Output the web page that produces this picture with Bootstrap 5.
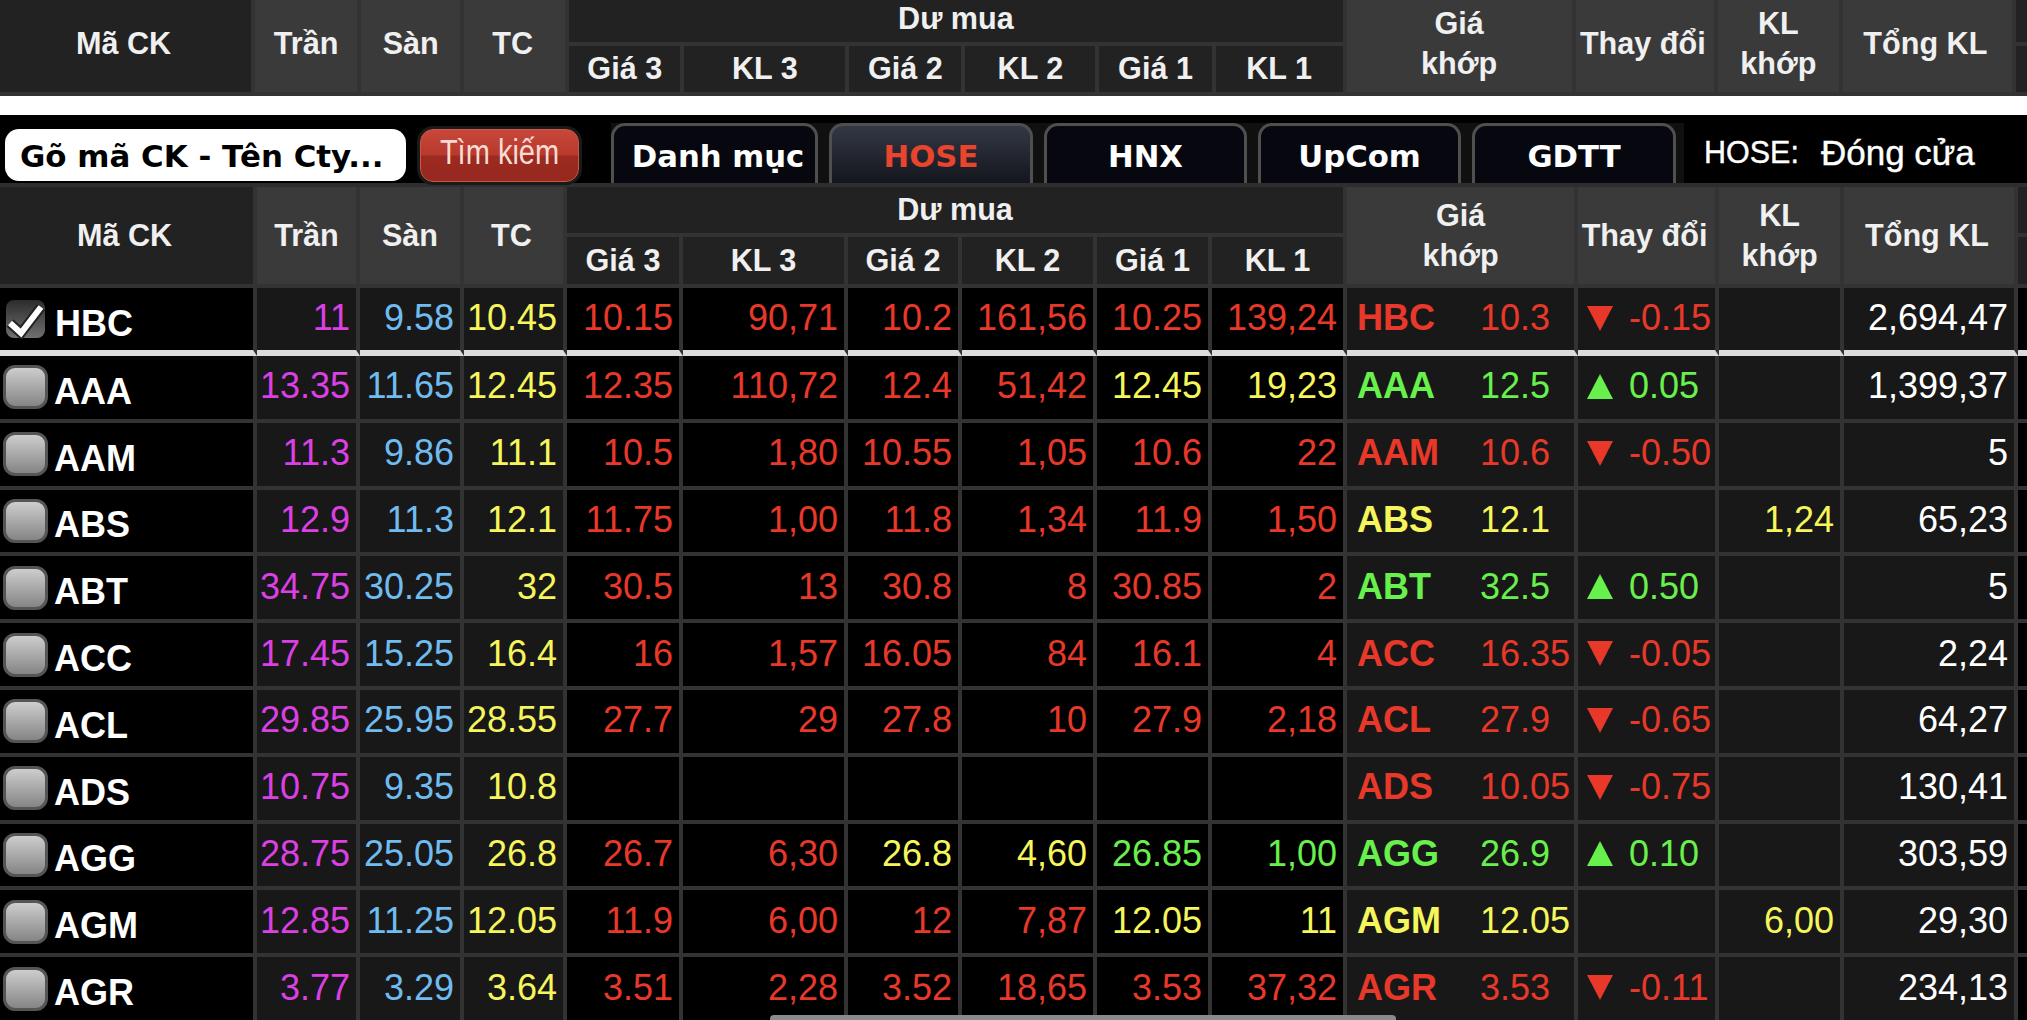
<!DOCTYPE html>
<html lang="vi">
<head>
    <meta charset="UTF-8">
    <meta name="viewport" content="width=device-width, initial-scale=1.0">
    <title>Bảng giá</title>
    <link href="https://cdn.jsdelivr.net/npm/bootstrap@5.3.0/dist/css/bootstrap.min.css" rel="stylesheet">
    <style>
        html, body {
            height: 100%;
        }
        body {
            background-color: #fff;
            font-family: "Liberation Sans", Arial, sans-serif;
            overflow: hidden;
            position: relative;
        }
        .board-section {
            background-color: #000;
            margin-top: 19px;
        }
        .top-clip {
            height: 96px;
            overflow: hidden;
        }
        .top-clip .price-table {
            margin-top: -5px;
        }

        /* thanh tim kiem + tab san */
        .board-toolbar {
            height: 72px;
            padding-left: 5px;
            border-bottom: 4px solid #2e2e2e;
        }
        .search-box.form-control {
            width: 401px;
            height: 52px;
            margin-top: 14px;
            padding: 3px 0 0 15px;
            border: 0;
            border-radius: 14px;
            background-color: #fff;
            color: #000;
            font: bold 30.9px/49px "DejaVu Sans", sans-serif;
            white-space: nowrap;
        }
        .search-btn.btn {
            width: 159px;
            height: 53px;
            margin: 14px 0 0 14px;
            padding: 0 0 6px;
            border: 1px solid #c9584a;
            border-radius: 13px;
            background: linear-gradient(#c8473a 0, #b83a2d 48%, #9c2a20 52%, #96281f 100%);
            box-shadow: 0 0 0 3px #1a1a1a;
            color: #f6dcd5;
            font-size: 29px;
            line-height: 1;
        }
        .search-label {
            display: inline-block;
            transform: scaleY(1.18);
        }
        .market-tabs.nav {
            height: 60px;
            width: 1073px;
            margin: 8px 0 0 32px;
            padding-right: 7px;
            gap: 11px;
            background-color: #101010;
            border: 0;
            flex-wrap: nowrap;
        }
        .market-tabs .nav-link {
            display: block;
            height: 60px;
            margin: 0;
            padding: 12px 0 0;
            text-align: center;
            background: #07080f;
            border: 3px solid #4f4f4f;
            border-bottom: 0;
            border-radius: 14px 14px 0 0;
            color: #fff;
            font: bold 30.7px/38px "DejaVu Sans", sans-serif;
        }
        .market-tabs .nav-link.active {
            background: linear-gradient(#333845, #14161d);
            border-color: #4f4f4f;
            color: #e8452c;
        }
        .market-tabs .tab-list {
            width: 207px;
            padding-left: 7px;
        }
        .tab-hose { width: 204px; }
        .tab-hnx, .tab-upcom { width: 203px; }
        .tab-gdtt { width: 204px; }
        .market-status {
            margin: 8px 0 0 20px;
            height: 60px;
            color: #fff;
            white-space: nowrap;
            gap: 22px;
            -webkit-text-stroke: 0.4px #fff;
        }
        .status-market {
            font-size: 30.5px;
        }
        .status-state {
            font-size: 35px;
        }

        /* bang gia */
        .price-table {
            --bs-table-bg: transparent;
            width: 2027px;
            table-layout: fixed;
            border-collapse: separate;
            border-spacing: 0;
            color: #fff;
        }
        .price-table > :not(caption) > * > * {
            padding: 0 6px 2px 0;
            border-style: solid;
            border-color: #333;
            border-width: 0 4px 4px 0;
            box-shadow: none;
            vertical-align: middle;
            white-space: nowrap;
            overflow: hidden;
        }
        .price-table > thead > * > * {
            padding: 0 0 2px;
            text-align: center;
            font-size: 30.6px;
            font-weight: 700;
            line-height: 40px;
            color: #f0f0f0;
            background-color: #222;
        }
        .price-table > thead > * > .head-light {
            background-color: #3a3a3a;
        }
        .price-table > thead > * > .head-wrap {
            white-space: normal;
        }
        .price-table > thead > * > .head-shift {
            padding-right: 4px;
        }
        .price-table > thead > * > .edge-col,
        .price-table > tbody > * > .edge-col {
            border-right-width: 0;
        }
        .main-head .row-a > th { height: 50px; }
        .main-head .row-b > th { height: 51px; }
        .top-clip .row-a > th { height: 51px; }
        .top-clip .row-b > th { height: 50px; }

        .price-table > tbody > * > td {
            height: 66.8px;
            font-size: 36px;
            line-height: 1;
            text-align: right;
            background-color: #000;
        }
        .price-table > tbody > * > .cell-grey {
            background-color: #181818;
        }
        .price-table > tbody > * > .cell-left {
            padding: 0 0 2px;
            text-align: left;
        }
        .price-table > tbody > * > .cell-name {
            padding: 0;
        }
        .price-table > tbody > .row-picked > td {
            height: 68px;
            border-bottom: 6px solid #dcdcdc;
        }
        .code-text {
            font-weight: 700;
        }
        .stock-name {
            margin: 9px 0 0 6px;
            color: #fff;
        }
        .match-code {
            width: 123px;
            margin-left: 10px;
        }
        .change-box {
            margin-left: 9px;
            gap: 16px;
        }
        .change-box svg {
            flex: none;
        }
        .tick-box {
            flex: none;
            width: 45px;
            height: 44px;
            margin-left: 3px;
            border: 3px solid #555;
            border-radius: 12px;
            background: linear-gradient(#cdcdcd, #858585);
        }
        .tick-box.tick-on {
            width: 39px;
            height: 38px;
            margin: 0 0 0 6px;
            border: 0;
            border-radius: 8px;
            background: linear-gradient(#2c2c2c, #707070);
        }
        .row-picked .stock-name {
            margin-left: 10px;
        }
        .col-r { color: #e8382a; }
        .col-g { color: #68f04c; }
        .col-y { color: #f6f65c; }
        .col-m { color: #dc40e4; }
        .col-b { color: #70bcf0; }

        .scroll-thumb {
            position: absolute;
            left: 770px;
            bottom: 0;
            width: 626px;
            height: 5px;
            border-radius: 4px 4px 0 0;
            background-color: #8a8a8a;
        }
    </style>
</head>
<body>

<!-- Dau bang bi cuon len tren cung -->
<div class="top-clip">
    <table class="table mb-0 price-table">
        <colgroup id="topCols"></colgroup>
        <thead id="topHead"></thead>
    </table>
</div>

<div class="board-section">
    <div class="board-toolbar d-flex align-items-start">
        <div class="form-control search-box">Gõ mã CK - Tên Cty...</div>
        <button type="button" class="btn search-btn"><span class="search-label">Tìm kiếm</span></button>
        <ul class="nav nav-tabs market-tabs">
            <li class="nav-item"><a class="nav-link tab-list" href="#">Danh mục</a></li>
            <li class="nav-item"><a class="nav-link tab-hose active" href="#">HOSE</a></li>
            <li class="nav-item"><a class="nav-link tab-hnx" href="#">HNX</a></li>
            <li class="nav-item"><a class="nav-link tab-upcom" href="#">UpCom</a></li>
            <li class="nav-item"><a class="nav-link tab-gdtt" href="#">GDTT</a></li>
        </ul>
        <div class="market-status d-flex align-items-center">
            <span class="status-market">HOSE:</span><span class="status-state">Đóng cửa</span>
        </div>
    </div>

    <table class="table mb-0 price-table">
        <colgroup id="mainCols"></colgroup>
        <thead id="mainHead" class="main-head"></thead>
        <tbody id="boardBody"></tbody>
    </table>
</div>

<div class="scroll-thumb"></div>

<script src="https://cdn.jsdelivr.net/npm/bootstrap@5.3.0/dist/js/bootstrap.bundle.min.js"></script>
<script>
    // Do rong cot cua hai bang (bang tren lech vai pixel)
    const MAIN_WIDTHS = [257, 103, 104, 103, 116, 165, 114, 135, 115, 135, 231, 141, 125, 174, 9];
    const TOP_WIDTHS = [255, 106, 103, 105, 115, 165, 116, 134, 116, 131, 229, 142, 125, 173, 11];

    // code, tran, san, tc, du mua (3 cap gia/kl), mau du mua, trang thai, gia khop, thay doi, kl khop, tong kl
    const ROWS = [
        ['HBC', '11', '9.58', '10.45', ['10.15', '90,71', '10.2', '161,56', '10.25', '139,24'], 'rrrrrr', 'r', '10.3', '-0.15', '', '2,694,47'],
        ['AAA', '13.35', '11.65', '12.45', ['12.35', '110,72', '12.4', '51,42', '12.45', '19,23'], 'rrrryy', 'g', '12.5', '0.05', '', '1,399,37'],
        ['AAM', '11.3', '9.86', '11.1', ['10.5', '1,80', '10.55', '1,05', '10.6', '22'], 'rrrrrr', 'r', '10.6', '-0.50', '', '5'],
        ['ABS', '12.9', '11.3', '12.1', ['11.75', '1,00', '11.8', '1,34', '11.9', '1,50'], 'rrrrrr', 'y', '12.1', '', '1,24', '65,23'],
        ['ABT', '34.75', '30.25', '32', ['30.5', '13', '30.8', '8', '30.85', '2'], 'rrrrrr', 'g', '32.5', '0.50', '', '5'],
        ['ACC', '17.45', '15.25', '16.4', ['16', '1,57', '16.05', '84', '16.1', '4'], 'rrrrrr', 'r', '16.35', '-0.05', '', '2,24'],
        ['ACL', '29.85', '25.95', '28.55', ['27.7', '29', '27.8', '10', '27.9', '2,18'], 'rrrrrr', 'r', '27.9', '-0.65', '', '64,27'],
        ['ADS', '10.75', '9.35', '10.8', ['', '', '', '', '', ''], 'rrrrrr', 'r', '10.05', '-0.75', '', '130,41'],
        ['AGG', '28.75', '25.05', '26.8', ['26.7', '6,30', '26.8', '4,60', '26.85', '1,00'], 'rryygg', 'g', '26.9', '0.10', '', '303,59'],
        ['AGM', '12.85', '11.25', '12.05', ['11.9', '6,00', '12', '7,87', '12.05', '11'], 'rrrryy', 'y', '12.05', '', '6,00', '29,30'],
        ['AGR', '3.77', '3.29', '3.64', ['3.51', '2,28', '3.52', '18,65', '3.53', '37,32'], 'rrrrrr', 'r', '3.53', '-0.11', '', '234,13']
    ];

    function colsHtml(widths) {
        return widths.map(w => `<col style="width:${w}px">`).join('');
    }

    function headHtml() {
        return `
            <tr class="row-a">
                <th rowspan="2" class="head-shift">Mã CK</th>
                <th rowspan="2" class="head-light">Trần</th>
                <th rowspan="2" class="head-light">Sàn</th>
                <th rowspan="2" class="head-light head-shift">TC</th>
                <th colspan="6">Dư mua</th>
                <th rowspan="2" class="head-light head-wrap">Giá<br>khớp</th>
                <th rowspan="2" class="head-light head-shift">Thay đổi</th>
                <th rowspan="2" class="head-light head-wrap">KL<br>khớp</th>
                <th rowspan="2" class="head-light head-shift">Tổng KL</th>
                <th class="edge-col"></th>
            </tr>
            <tr class="row-b">
                <th>Giá 3</th><th>KL 3</th><th>Giá 2</th><th>KL 2</th><th>Giá 1</th><th>KL 1</th>
                <th class="edge-col"></th>
            </tr>`;
    }

    function arrowSvg(up) {
        const points = up ? '13,0 26,25 0,25' : '0,0 26,0 13,25';
        return `<svg width="26" height="25" viewBox="0 0 26 25"><polygon points="${points}" fill="currentColor"/></svg>`;
    }

    function tickHtml(picked) {
        if (!picked) {
            return '<span class="tick-box"></span>';
        }
        return `<span class="tick-box tick-on"><svg width="39" height="38" viewBox="0 0 39 38">
            <path d="M4 22 L15 32 L35 6" fill="none" stroke="#222" stroke-width="10"/>
            <path d="M4 22 L15 32 L35 6" fill="none" stroke="#fff" stroke-width="6"/>
        </svg></span>`;
    }

    function changeHtml(value, state) {
        if (!value) {
            return '';
        }
        return `<div class="d-flex align-items-center change-box col-${state}">${arrowSvg(value[0] !== '-')}<span>${value}</span></div>`;
    }

    function rowHtml(r, index) {
        const [code, ceil, floor, ref, bids, bidColors, state, price, change, vol, total] = r;
        const bidCells = bids.map((v, i) => `<td class="col-${bidColors[i]}">${v}</td>`).join('');
        return `
            <tr class="${index === 0 ? 'row-picked' : ''}">
                <td class="cell-left cell-name"><div class="d-flex align-items-center">${tickHtml(index === 0)}<span class="code-text stock-name">${code}</span></div></td>
                <td class="cell-grey col-m">${ceil}</td>
                <td class="cell-grey col-b">${floor}</td>
                <td class="cell-grey col-y">${ref}</td>
                ${bidCells}
                <td class="cell-grey cell-left col-${state}"><div class="d-flex align-items-center"><span class="code-text match-code">${code}</span><span>${price}</span></div></td>
                <td class="cell-grey cell-left">${changeHtml(change, state)}</td>
                <td class="cell-grey col-${state}">${vol}</td>
                <td class="cell-grey">${total}</td>
                <td class="edge-col"></td>
            </tr>`;
    }

    document.getElementById('topCols').innerHTML = colsHtml(TOP_WIDTHS);
    document.getElementById('mainCols').innerHTML = colsHtml(MAIN_WIDTHS);
    document.getElementById('topHead').innerHTML = headHtml();
    document.getElementById('mainHead').innerHTML = headHtml();
    document.getElementById('boardBody').innerHTML = ROWS.map(rowHtml).join('');
</script>
</body>
</html>
